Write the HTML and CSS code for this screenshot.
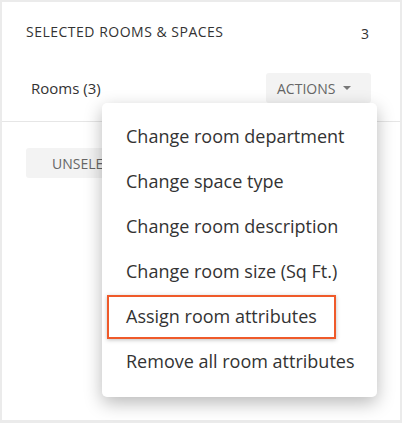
FILE: index.html
```html
<!DOCTYPE html>
<html>
<head>
<meta charset="utf-8">
<link rel="stylesheet" href="styles.css">
</head>
<body>
<div class="panel">
  <div class="header">
    <span class="title">SELECTED ROOMS &amp; SPACES</span>
    <span class="count">3</span>
  </div>
  <div class="row">
    <span class="rooms">Rooms (3)</span>
    <button class="actions">ACTIONS <span class="caret"></span></button>
  </div>
  <div class="body">
    <button class="unselect">UNSELECT ALL</button>
  </div>
  <div class="menu">
    <div class="item">Change room department</div>
    <div class="item">Change space type</div>
    <div class="item">Change room description</div>
    <div class="item">Change room size (Sq Ft.)</div>
    <div class="item">Assign room attributes</div>
    <div class="item">Remove all room attributes</div>
  </div>
  <div class="highlight"></div>
</div>
</body>
</html>
```
FILE: styles.css
```css
html, body {
  margin: 0;
  padding: 0;
}
body {
  background: #ebebeb;
  font-family: "Open Sans", "Liberation Sans", sans-serif;
  width: 402px;
  height: 423px;
  overflow: hidden;
}
.panel {
  position: relative;
  margin: 2px 2px 0 2px;
  height: 418px;
  background: #ffffff;
}
.header {
  display: flex;
  justify-content: space-between;
  align-items: flex-start;
  padding: 21px 31px 0 24px;
  height: 50px;
  box-sizing: border-box;
}
.title {
  font-size: 14px;
  letter-spacing: 0.5px;
  color: #333;
  line-height: 18px;
}
.count {
  font-size: 14px;
  color: #333;
  line-height: 18px;
  margin-top: 2px;
}
.row {
  display: flex;
  justify-content: space-between;
  align-items: center;
  padding: 3px 29px 0 29px;
  height: 70px;
  border-bottom: 1px solid #e6e6e6;
  box-sizing: border-box;
}
.rooms {
  font-size: 15px;
  color: #333;
}
.actions {
  font-family: inherit;
  border: none;
  background: #f3f3f3;
  border-radius: 3px;
  width: 105px;
  height: 30px;
  font-size: 14px;
  color: #666;
  padding: 0 0 0 11px;
  text-align: left;
  display: flex;
  align-items: center;
}
.caret {
  display: inline-block;
  width: 0;
  height: 0;
  border-left: 4.5px solid transparent;
  border-right: 4.5px solid transparent;
  border-top: 4.5px solid #777;
  margin-left: 8px;
}
.body {
  padding: 26px 0 0 24px;
}
.unselect {
  font-family: inherit;
  border: none;
  background: #f3f3f3;
  border-radius: 3px;
  height: 30px;
  font-size: 14px;
  color: #666;
  padding: 0 26px;
}
.menu {
  position: absolute;
  left: 100px;
  top: 101px;
  width: 275px;
  background: #fff;
  border-radius: 5px;
  box-shadow: 0 6px 18px rgba(0, 0, 0, 0.28);
  padding: 11px 0 13px 0;
}
.item {
  height: 45px;
  line-height: 45px;
  padding-left: 24px;
  font-size: 18px;
  color: #333;
  white-space: nowrap;
}
.highlight {
  position: absolute;
  left: 105px;
  top: 293px;
  width: 225px;
  height: 40px;
  border: 2px solid #ef5a2a;
  box-shadow: 0 1px 4px rgba(0, 0, 0, 0.25);
}
```
